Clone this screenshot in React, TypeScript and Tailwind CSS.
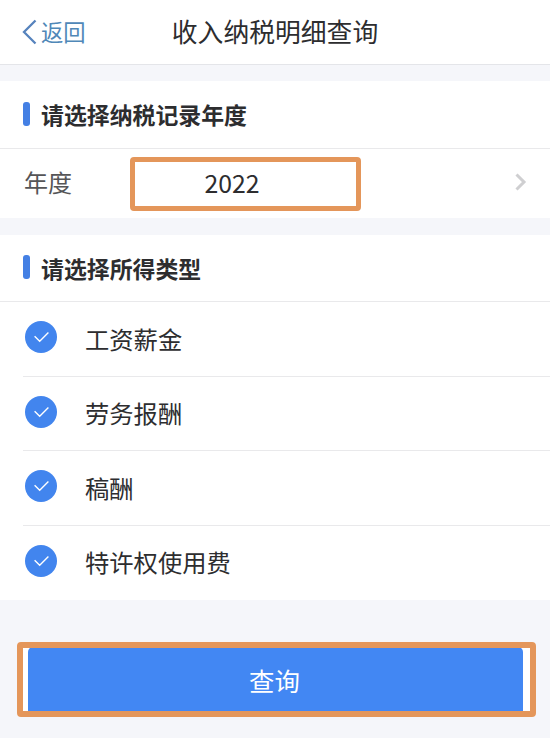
import React, { useState } from "react";

const INCOME_TYPES = [
  { id: "salary", label: "工资薪金" },
  { id: "labor", label: "劳务报酬" },
  { id: "manuscript", label: "稿酬" },
  { id: "royalty", label: "特许权使用费" },
];

function SectionTitle({ children }: { children: React.ReactNode }) {
  return (
    <div className="flex items-center h-[67.5px] pl-[23px] border-b border-[#e9e9eb]">
      <span className="w-[7px] h-6 -mt-[1px] rounded-[3px] bg-[#4480e4]" />
      <h2 className="ml-[11px] text-[22.9px] leading-8 font-bold text-[#2d2d2f]">
        {children}
      </h2>
    </div>
  );
}

function CheckCircle({ checked }: { checked: boolean }) {
  return (
    <span
      className={`flex items-center justify-center size-8 rounded-full ${
        checked ? "bg-[#4285ee]" : "border border-gray-300"
      }`}
    >
      {checked && (
        <svg width="16" height="12" viewBox="0 0 16 12" fill="none">
          <path d="M1.6 5.2L6.7 10.2L15.4 1.6" stroke="#fff" strokeWidth="1.4" />
        </svg>
      )}
    </span>
  );
}

export default function App() {
  const [selected, setSelected] = useState(INCOME_TYPES.map((t) => t.id));

  const toggle = (id: string) => {
    setSelected((prev) =>
      prev.includes(id) ? prev.filter((s) => s !== id) : [...prev, id]
    );
  };

  return (
    <div className="w-full h-[738px] flex flex-col overflow-hidden bg-[#f5f6fa] font-['Noto_Sans_CJK_SC',sans-serif] text-[#2d2d2f]">
      {/* Header */}
      <header className="grid grid-cols-[150px_1fr_150px] items-center h-[65px] shrink-0 bg-white border-b border-[#e4e5e9]">
        <button className="flex items-center pl-[22px] -mt-[1px] text-[#5088b8]">
          <svg width="15" height="26" viewBox="0 0 15 26" fill="none">
            <path d="M13.5 1.5L2 13L13.5 24.5" stroke="#5683bd" strokeWidth="2.3" />
          </svg>
          <span className="ml-1 -mt-[1px] text-[22.3px] leading-8">返回</span>
        </button>
        <h1 className="-mt-[2px] text-center text-[25.8px] leading-9 whitespace-nowrap">
          收入纳税明细查询
        </h1>
      </header>

      {/* Year */}
      <section className="mt-4 shrink-0 bg-white">
        <SectionTitle>请选择纳税记录年度</SectionTitle>
        <div className="flex items-center h-[69px] pl-6 pr-[23px]">
          <span className="w-[105.5px] -mt-[2px] text-[24px] leading-8 text-[#555557]">年度</span>
          <div className="flex items-center w-[231.5px] h-[54px] mt-[1px] pl-[70px] border-[5.5px] border-[#e4965a] rounded-[4px]">
            <span className="-mt-[3px] text-[24.8px] leading-8">2022</span>
          </div>
          <svg className="ml-auto -mt-[2px]" width="12" height="18" viewBox="0 0 12 18" fill="none">
            <path d="M1.5 1.5L9 9L1.5 16.5" stroke="#cfcfd1" strokeWidth="3" />
          </svg>
        </div>
      </section>

      {/* Income types */}
      <section className="mt-[17px] shrink-0 bg-white">
        <SectionTitle>请选择所得类型</SectionTitle>
        <ul className="pl-[23px]">
          {INCOME_TYPES.map((type) => (
            <li
              key={type.id}
              onClick={() => toggle(type.id)}
              className="flex items-center h-[74.5px] pl-[2px] pb-[3px] border-b border-[#e9e9eb] last:border-transparent"
            >
              <CheckCircle checked={selected.includes(type.id)} />
              <span className="ml-7 mt-[3px] text-[24.3px] leading-8">{type.label}</span>
            </li>
          ))}
        </ul>
      </section>

      {/* Submit */}
      <div className="relative mt-[42px] ml-[17px] w-[519px] h-[75px] pl-[11px] pr-[13px] shrink-0 bg-white rounded-[4px]">
        <button className="w-full h-[70px] mt-[5px] pb-[3px] pr-[2px] rounded-[5px] bg-[#4287f3] text-[25.4px] text-white">
          查询
        </button>
        <span className="absolute inset-0 border-[6px] border-[#e4965a] rounded-[4px] pointer-events-none" />
      </div>
    </div>
  );
}
